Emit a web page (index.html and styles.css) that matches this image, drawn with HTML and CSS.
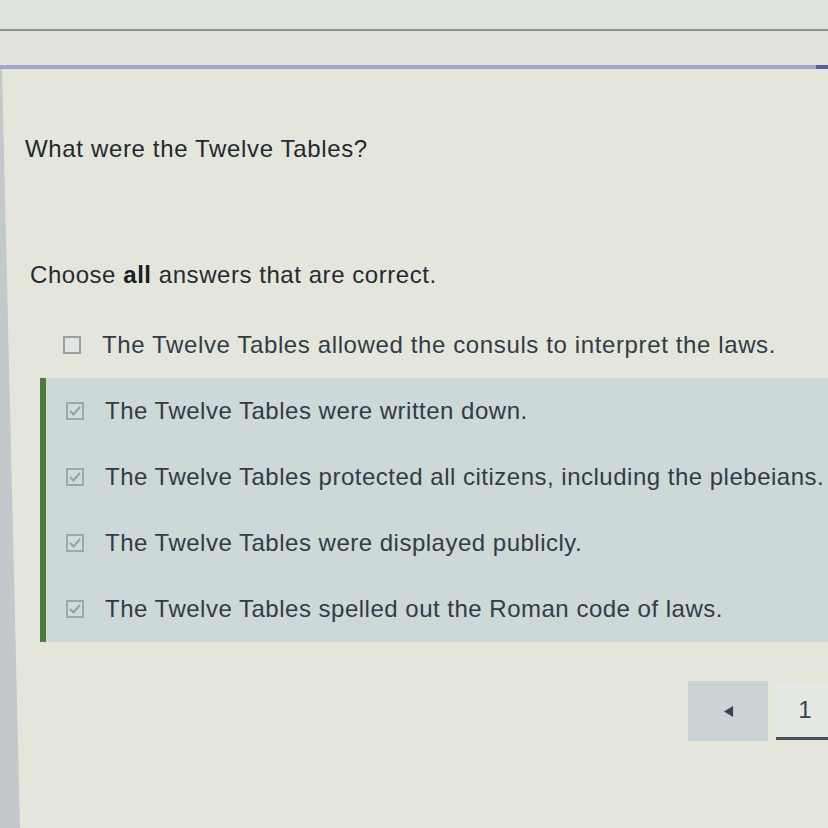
FILE: index.html
```html
<!DOCTYPE html>
<html lang="en">
<head>
<meta charset="utf-8">
<title>What were the Twelve Tables?</title>
<link rel="stylesheet" href="styles.css">
</head>
<body>
<div class="topband"></div>
<div class="rule-thin"></div>
<div class="band"></div>
<div class="rule-progress"><span class="progress-end"></span></div>
<main class="main">
  <span class="edge" aria-hidden="true"></span>
  <h1 class="question">What were the Twelve Tables?</h1>
  <p class="prompt">Choose <b>all</b> answers that are correct.</p>
  <ul class="options">
    <li class="option">
      <span class="box"></span>
      <span class="label wide">The Twelve Tables allowed the consuls to interpret the laws.</span>
    </li>
  </ul>
  <ul class="options selected">
    <li class="option">
      <span class="box checked"><svg viewBox="0 0 14 14" width="14" height="14"><path d="M2 7 L5.5 10.5 L12 3" fill="none" stroke="#93a0a5" stroke-width="2"/></svg></span>
      <span class="label">The Twelve Tables were written down.</span>
    </li>
    <li class="option">
      <span class="box checked"><svg viewBox="0 0 14 14" width="14" height="14"><path d="M2 7 L5.5 10.5 L12 3" fill="none" stroke="#93a0a5" stroke-width="2"/></svg></span>
      <span class="label">The Twelve Tables protected all citizens, including the plebeians.</span>
    </li>
    <li class="option">
      <span class="box checked"><svg viewBox="0 0 14 14" width="14" height="14"><path d="M2 7 L5.5 10.5 L12 3" fill="none" stroke="#93a0a5" stroke-width="2"/></svg></span>
      <span class="label">The Twelve Tables were displayed publicly.</span>
    </li>
    <li class="option">
      <span class="box checked"><svg viewBox="0 0 14 14" width="14" height="14"><path d="M2 7 L5.5 10.5 L12 3" fill="none" stroke="#93a0a5" stroke-width="2"/></svg></span>
      <span class="label">The Twelve Tables spelled out the Roman code of laws.</span>
    </li>
  </ul>
  <nav class="pager">
    <button class="pg-prev" type="button" aria-label="Previous"><svg viewBox="0 0 12 14" width="11" height="13"><path d="M11 1 L1 7 L11 13 Z" fill="#3a4450"/></svg></button>
    <button class="pg-num" type="button">1</button>
  </nav>
</main>
</body>
</html>
```
FILE: styles.css
```css
html, body {
  margin: 0;
  padding: 0;
  height: 828px;
  overflow: hidden;
}
body {
  background: #e3e6de;
  font-family: "Liberation Sans", Arial, sans-serif;
  color: #2c3034;
}
.topband {
  height: 29px;
  background: #dfe3dd;
}
.rule-thin {
  height: 2px;
  background: #8d9397;
}
.band {
  height: 34px;
  background: #e0e4dd;
}
.rule-progress {
  height: 4px;
  background: #a2a5c5;
  display: flex;
  justify-content: flex-end;
}
.progress-end {
  width: 12px;
  height: 5px;
  background: #5a5e9e;
}
.main {
  position: relative;
  height: 759px;
  background: #e4e6dc;
}
.edge {
  position: absolute;
  left: 0;
  top: 0;
  width: 22px;
  height: 100%;
  background: #c3c8cc;
  clip-path: polygon(0 0, 2px 0, 20px 100%, 0 100%);
}
.question {
  margin: 0;
  padding: 66px 0 0 25px;
  font-size: 24px;
  font-weight: normal;
  line-height: 28px;
  letter-spacing: 0.65px;
  color: #25292d;
}
.prompt {
  margin: 98px 0 0 0;
  padding-left: 30px;
  font-size: 24px;
  line-height: 28px;
  letter-spacing: 0.55px;
  color: #272b2f;
}
.prompt b {
  color: #1b1e22;
}
.options {
  list-style: none;
  margin: 0;
  padding: 0;
}
.options:first-of-type {
  margin-top: 23px;
}
.option {
  height: 66px;
  display: flex;
  align-items: center;
  padding-left: 63px;
  box-sizing: border-box;
}
.selected {
  margin-left: 40px;
  border-left: 6px solid #4e7a3e;
  background: #cdd8d9;
}
.selected .option {
  padding-left: 20px;
}
.box {
  width: 18px;
  height: 18px;
  box-sizing: border-box;
  border: 2px solid #98a1a6;
  background: #e1e5e2;
  flex: none;
  display: flex;
  align-items: center;
  justify-content: center;
}
.box.checked {
  border-color: #9ca8ac;
  background: #d2dbdc;
}
.label {
  margin-left: 21px;
  font-size: 24px;
  line-height: 28px;
  letter-spacing: 0.5px;
  color: #323c46;
  white-space: nowrap;
}
.label.wide {
  letter-spacing: 0.62px;
}
.pager {
  margin-top: 39px;
  display: flex;
  justify-content: flex-end;
  gap: 8px;
}
.pg-prev {
  width: 80px;
  height: 60px;
  border: none;
  background: #cad3d5;
  display: flex;
  align-items: center;
  justify-content: center;
  padding: 0;
}
.pg-num {
  width: 52px;
  height: 58px;
  border: none;
  border-bottom: 3px solid #4a525e;
  background: #e4e9e4;
  font-family: "Liberation Sans", Arial, sans-serif;
  font-size: 24px;
  color: #3a4550;
  padding: 0 0 0 6px;
  margin-top: 1px;
}
```
